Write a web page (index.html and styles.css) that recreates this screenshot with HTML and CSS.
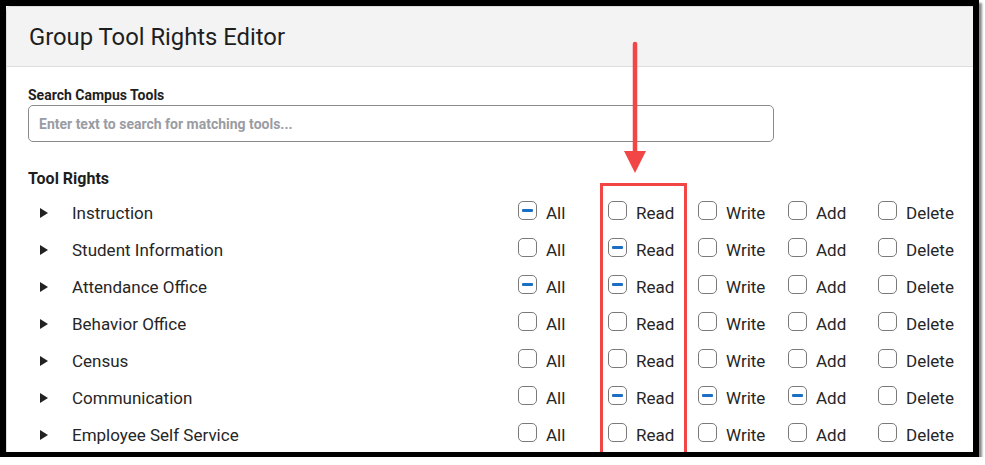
FILE: index.html
```html
<!DOCTYPE html>
<html>
<head>
<meta charset="utf-8">
<link rel="stylesheet" href="styles.css">
</head>
<body>
<div class="frame">
  <div class="panel">
    <div class="header"><h1 class="title">Group Tool Rights Editor</h1></div>
    <div class="body">
      <label class="field-label">Search Campus Tools</label>
      <div class="input">Enter text to search for matching tools...</div>
      <div class="section-label">Tool Rights</div>
      <div class="rows">
        <div class="row">
          <span class="caret"></span><span class="name">Instruction</span>
          <span class="opt"><span class="cb ind"></span>All</span>
          <span class="opt"><span class="cb"></span>Read</span>
          <span class="opt"><span class="cb"></span>Write</span>
          <span class="opt"><span class="cb"></span>Add</span>
          <span class="opt"><span class="cb"></span>Delete</span>
        </div>
        <div class="row">
          <span class="caret"></span><span class="name">Student Information</span>
          <span class="opt"><span class="cb"></span>All</span>
          <span class="opt"><span class="cb ind"></span>Read</span>
          <span class="opt"><span class="cb"></span>Write</span>
          <span class="opt"><span class="cb"></span>Add</span>
          <span class="opt"><span class="cb"></span>Delete</span>
        </div>
        <div class="row">
          <span class="caret"></span><span class="name">Attendance Office</span>
          <span class="opt"><span class="cb ind"></span>All</span>
          <span class="opt"><span class="cb ind"></span>Read</span>
          <span class="opt"><span class="cb"></span>Write</span>
          <span class="opt"><span class="cb"></span>Add</span>
          <span class="opt"><span class="cb"></span>Delete</span>
        </div>
        <div class="row">
          <span class="caret"></span><span class="name">Behavior Office</span>
          <span class="opt"><span class="cb"></span>All</span>
          <span class="opt"><span class="cb"></span>Read</span>
          <span class="opt"><span class="cb"></span>Write</span>
          <span class="opt"><span class="cb"></span>Add</span>
          <span class="opt"><span class="cb"></span>Delete</span>
        </div>
        <div class="row">
          <span class="caret"></span><span class="name">Census</span>
          <span class="opt"><span class="cb"></span>All</span>
          <span class="opt"><span class="cb"></span>Read</span>
          <span class="opt"><span class="cb"></span>Write</span>
          <span class="opt"><span class="cb"></span>Add</span>
          <span class="opt"><span class="cb"></span>Delete</span>
        </div>
        <div class="row">
          <span class="caret"></span><span class="name">Communication</span>
          <span class="opt"><span class="cb"></span>All</span>
          <span class="opt"><span class="cb ind"></span>Read</span>
          <span class="opt"><span class="cb ind"></span>Write</span>
          <span class="opt"><span class="cb ind"></span>Add</span>
          <span class="opt"><span class="cb"></span>Delete</span>
        </div>
        <div class="row">
          <span class="caret"></span><span class="name">Employee Self Service</span>
          <span class="opt"><span class="cb"></span>All</span>
          <span class="opt"><span class="cb"></span>Read</span>
          <span class="opt"><span class="cb"></span>Write</span>
          <span class="opt"><span class="cb"></span>Add</span>
          <span class="opt"><span class="cb"></span>Delete</span>
        </div>
      </div>
    </div>
  </div>
  <svg class="arrow" width="30" height="140" viewBox="0 0 30 140">
    <line x1="15" y1="3" x2="15" y2="115" stroke="#f24545" stroke-width="4.5" stroke-linecap="round"/>
    <polygon points="4,110 26,110 15,132" fill="#f24545"/>
  </svg>
  <div class="highlight"></div>
</div>
</body>
</html>
```

FILE: styles.css
```css
* { box-sizing: border-box; }
html, body { margin: 0; padding: 0; background: #fff; }
body { font-family: Roboto, "Liberation Sans", Arial, sans-serif; color: #222; }

.frame {
  position: relative;
  width: 979px;
  height: 457px;
  border-style: solid;
  border-color: #000;
  border-width: 6px 6px 5px 6px;
  box-shadow: 3px 3px 2px rgba(0,0,0,0.45);
  overflow: hidden;
  background: #fff;
}

.panel {
  height: 100%;
  border-top: 1px solid #dcdcdc;
  border-left: 1px solid #dcdcdc;
  border-top-left-radius: 5px;
  overflow: hidden;
}

.header {
  height: 60px;
  background: #f3f3f3;
  border-bottom: 1px solid #dedede;
  display: flex;
  align-items: center;
  padding-left: 22px;
}
.title {
  margin: 0;
  font-weight: 400;
  font-size: 23.8px;
  color: #1e1e1e;
}

.body { padding: 0 0 0 21px; }

.field-label {
  display: block;
  font-size: 14px;
  font-weight: 700;
  color: #1e1e1e;
  margin-top: 20px;
  line-height: 16px;
}
.input {
  width: 746px;
  height: 37px;
  margin-top: 2px;
  border: 1px solid #8a8a8a;
  border-radius: 5px;
  padding-left: 10px;
  display: flex;
  align-items: center;
  font-size: 14px;
  font-weight: 700;
  color: #9a9ca3;
}

.section-label {
  font-size: 16px;
  font-weight: 700;
  color: #1e1e1e;
  margin-top: 27px;
  line-height: 20px;
}

.rows { margin-top: 5px; }
.row {
  display: grid;
  grid-template-columns: 44px 446px repeat(5, 90px);
  align-items: center;
  height: 37px;
}
.caret {
  width: 0; height: 0;
  margin-left: 12px;
  border-left: 8px solid #222;
  border-top: 5px solid transparent;
  border-bottom: 5px solid transparent;
}
.name {
  font-size: 17px;
  color: #262626;
}
.opt {
  display: flex;
  align-items: center;
  font-size: 17px;
  color: #262626;
}
.cb {
  width: 19px;
  height: 19px;
  border: 1.5px solid #7a7a7a;
  border-radius: 5px;
  margin-right: 9px;
  display: flex;
  align-items: center;
  justify-content: center;
  position: relative;
  top: -2px;
}
.cb.ind::after {
  content: "";
  width: 11px;
  height: 3px;
  background: #1a6fc4;
  border-radius: 1px;
}

.arrow {
  position: absolute;
  left: 614px;
  top: 35px;
}
.highlight {
  position: absolute;
  left: 594px;
  top: 177px;
  width: 87px;
  height: 275px;
  border: 3px solid #f24545;
}
```
